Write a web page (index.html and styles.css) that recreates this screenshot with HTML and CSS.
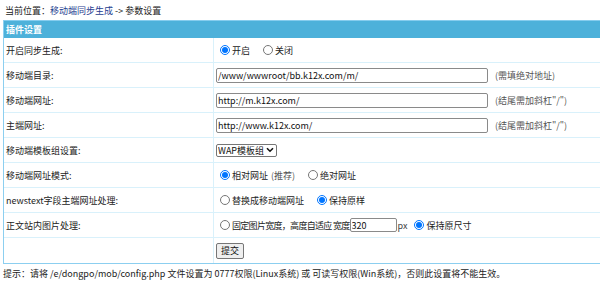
FILE: index.html
```html
<!DOCTYPE html>
<html lang="zh-CN">
<head>
<meta charset="utf-8">
<title>参数设置</title>
<link rel="stylesheet" href="styles.css">
</head>
<body>
<div class="crumb">当前位置：<a class="link" href="#">移动端同步生成</a> -&gt; 参数设置</div>
<form class="panel">
  <div class="head">插件设置</div>
  <div class="row">
    <div class="label">开启同步生成:</div>
    <div class="field">
      <label class="opt"><input type="radio" name="open" checked>开启</label>
      <label class="opt"><input type="radio" name="open">关闭</label>
    </div>
  </div>
  <div class="row">
    <div class="label">移动端目录:</div>
    <div class="field">
      <input class="text" type="text" value="/www/wwwroot/bb.k12x.com/m/">
      <span class="note">(需填绝对地址)</span>
    </div>
  </div>
  <div class="row">
    <div class="label">移动端网址:</div>
    <div class="field">
      <input class="text" type="text" value="http://m.k12x.com/">
      <span class="note">(结尾需加斜杠"/")</span>
    </div>
  </div>
  <div class="row">
    <div class="label">主端网址:</div>
    <div class="field">
      <input class="text" type="text" value="http://www.k12x.com/">
      <span class="note">(结尾需加斜杠"/")</span>
    </div>
  </div>
  <div class="row">
    <div class="label">移动端模板组设置:</div>
    <div class="field">
      <span class="selbox">
        <select class="sel"><option>WAP模板组</option></select>
        <svg class="chev" width="8" height="6" viewBox="0 0 8 6"><path d="M1 1.2 L4 4.2 L7 1.2" fill="none" stroke="#111" stroke-width="1.6"/></svg>
      </span>
    </div>
  </div>
  <div class="row">
    <div class="label">移动端网址模式:</div>
    <div class="field">
      <label class="opt"><input type="radio" name="mode" checked>相对网址<span class="rec">(推荐)</span></label>
      <label class="opt"><input type="radio" name="mode">绝对网址</label>
    </div>
  </div>
  <div class="row">
    <div class="label">newstext字段主端网址处理:</div>
    <div class="field">
      <label class="opt"><input type="radio" name="nt">替换成移动端网址</label>
      <label class="opt"><input type="radio" name="nt" checked>保持原样</label>
    </div>
  </div>
  <div class="row">
    <div class="label">正文站内图片处理:</div>
    <div class="field">
      <label class="opt tight"><input type="radio" name="img"><span class="fix">固定图片宽度，高度自适应 宽度</span></label><input class="num" type="text" value="320"><span class="px">px</span>
      <label class="opt"><input type="radio" name="img" checked>保持原尺寸</label>
    </div>
  </div>
  <div class="row last">
    <div class="label"></div>
    <div class="field">
      <button class="btn" type="button">提交</button>
    </div>
  </div>
</form>
<div class="tip">提示：请将 /e/dongpo/mob/config.php 文件设置为 0777权限(Linux系统) 或 可读写权限(Win系统)，否则此设置将不能生效。</div>
</body>
</html>
```
FILE: styles.css
```css
html, body {
  margin: 0;
  padding: 0;
  background: #fff;
}
body {
  padding-left: 3px;
  font-family: "Noto Sans CJK SC", "Noto Sans", sans-serif;
  font-size: 9px;
  color: #222;
}
.crumb {
  height: 20px;
  line-height: 22px;
  padding-left: 2px;
  color: #222;
}
.link {
  color: #1e3d8f;
  text-decoration: none;
}
.panel {
  margin: 0;
  border-left: 1px solid #8ccff0;
  border-bottom: 1px solid #8ccff0;
}
.head {
  height: 17px;
  line-height: 18px;
  background: #4db1da;
  border-top: 1px solid #86cdee;
  color: #fff;
  font-weight: bold;
  padding-left: 2px;
}
.row {
  display: grid;
  grid-template-columns: 210px 1fr;
  height: 25px;
  border-bottom: 1px solid #d9f1fb;
  box-sizing: border-box;
}
.row.last {
  border-bottom: none;
  height: 25px;
}
.label {
  display: flex;
  align-items: center;
  padding-left: 2px;
  border-right: 1px solid #d9f1fb;
}
.field {
  display: flex;
  align-items: center;
  padding-left: 2px;
}
.opt {
  display: inline-flex;
  align-items: center;
  margin-right: 9px;
}
.opt.tight {
  margin-right: 0;
}
.fix {
  letter-spacing: -0.7px;
}
.opt input {
  width: 10px;
  height: 10px;
  margin: 0 2px 0 4px;
}
.rec {
  margin-left: 3px;
  color: #555;
}
.text {
  width: 272px;
  height: 15px;
  box-sizing: border-box;
  margin: 0;
  padding: 0 1px;
  font-family: inherit;
  font-size: 9px;
  color: #111;
  border: 1px solid #8a8a8a;
  border-radius: 2px;
}
.note {
  margin-left: 7px;
  color: #555;
}
.selbox {
  display: inline-flex;
  align-items: center;
  gap: 2px;
  height: 13px;
  width: 61px;
  box-sizing: border-box;
  border: 1px solid #767676;
  border-radius: 2px;
  background: #fff;
  padding: 0 2px 0 1px;
}
.sel {
  appearance: none;
  -webkit-appearance: none;
  flex: 1;
  min-width: 0;
  height: 11px;
  margin: 0;
  padding: 0;
  border: none;
  outline: none;
  background: transparent;
  font-family: inherit;
  font-size: 9px;
  line-height: 11px;
  color: #111;
}
.chev {
  flex: none;
}
.num {
  width: 47px;
  height: 14px;
  box-sizing: border-box;
  margin: 0;
  padding: 0 1px;
  font-family: inherit;
  font-size: 9px;
  color: #111;
  border: 1px solid #8a8a8a;
  border-radius: 2px;
}
.px {
  margin-left: 1px;
  margin-right: 3px;
  color: #444;
}
.btn {
  height: 16px;
  width: 28px;
  margin: 0;
  padding: 0;
  font-family: inherit;
  font-size: 9px;
  color: #111;
  background: #efefef;
  border: 1px solid #767676;
  border-radius: 2px;
}
.tip {
  padding-left: 0;
  margin-top: 4px;
  line-height: 12px;
  color: #222;
}
```
